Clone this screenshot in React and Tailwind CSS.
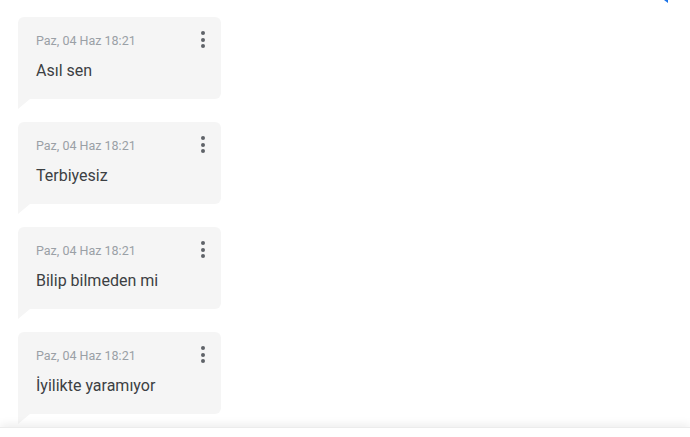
const messages = ['Asıl sen', 'Terbiyesiz', 'Bilip bilmeden mi', 'İyilikte yaramıyor'];

function Bubble({ text }) {
  return (
    <div className="flex flex-col">
      <div className="relative w-[203px] h-[82px] bg-[#f5f5f5] rounded-t-md rounded-br-md px-[18px] pt-[16px]">
        <div className="text-[12.5px] leading-[16px] text-[#9aa0a6]">Paz, 04 Haz 18:21</div>
        <div className="mt-[12px] text-[16px] leading-[20px] text-[#3c4043]">{text}</div>
        <button className="absolute top-[12px] right-[14px] flex flex-col gap-[2.5px] p-[2px]" aria-label="Menü">
          <span className="w-[4px] h-[4px] rounded-full bg-[#5f6368]" />
          <span className="w-[4px] h-[4px] rounded-full bg-[#5f6368]" />
          <span className="w-[4px] h-[4px] rounded-full bg-[#5f6368]" />
        </button>
      </div>
      <div className="w-[12px] h-[10px] bg-[#f5f5f5] [clip-path:polygon(0_0,100%_0,0_100%)]" />
    </div>
  );
}

export default function App() {
  return (
    <div className="w-[690px] h-[437px] bg-white overflow-hidden flex flex-col font-['Roboto',sans-serif]">
      <main className="relative h-[427px] overflow-hidden px-[18px] pt-[17px] flex flex-col gap-[13px]">
        <div className="absolute top-0 right-[22px] w-[4px] h-[3px] bg-[#1a73e8] [clip-path:polygon(0_0,100%_0,100%_100%)]" />
        {messages.map((m) => (
          <Bubble key={m} text={m} />
        ))}
      </main>
      <footer className="h-[10px] bg-white shadow-[0_-3px_8px_rgba(0,0,0,0.07)] border-t border-[#ececec] z-10" />
    </div>
  );
}
